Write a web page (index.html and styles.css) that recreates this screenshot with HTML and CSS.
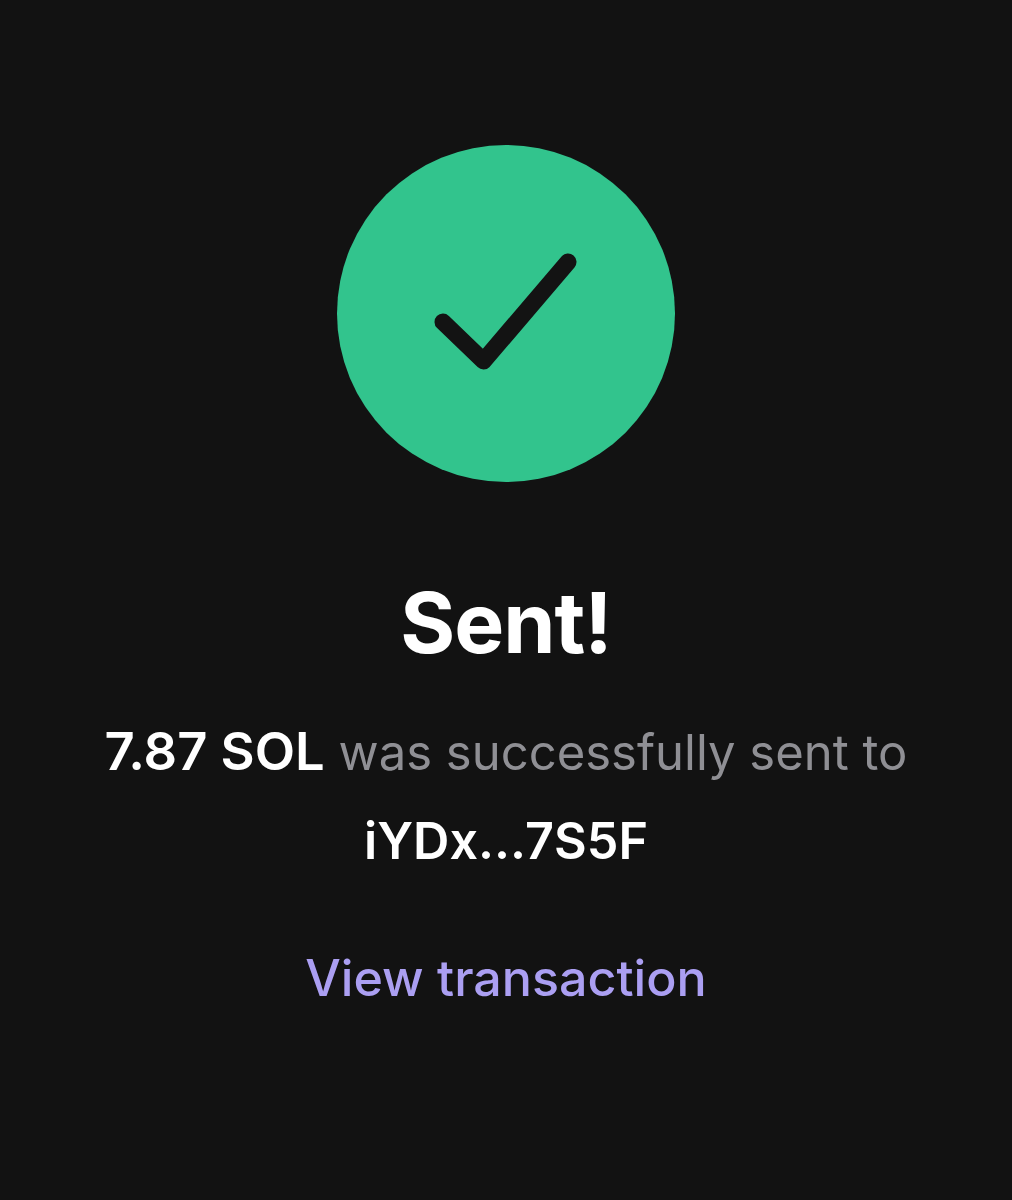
FILE: index.html
```html
<!DOCTYPE html>
<html lang="en">
<head>
<meta charset="utf-8">
<title>Sent</title>
<link rel="stylesheet" href="styles.css">
</head>
<body>
<main class="screen">
  <div class="badge">
    <svg class="check" viewBox="0 0 338 337" width="338" height="337" aria-hidden="true">
      <path d="M106 177L146.500 216L231 117" fill="none" stroke="#131313" stroke-width="17" stroke-linecap="round" stroke-linejoin="round"/>
    </svg>
  </div>
  <h1 class="title">Sent!</h1>
  <p class="line"><strong class="strong">7.87 SOL</strong> was successfully sent to</p>
  <p class="line address">iYDx...7S5F</p>
  <a class="link" href="#">View transaction</a>
</main>
</body>
</html>
```
FILE: styles.css
```css
html, body { margin: 0; padding: 0; background: #121212; }
.screen {
  width: 1012px;
  height: 1200px;
  box-sizing: border-box;
  padding-top: 145px;
  display: flex;
  flex-direction: column;
  align-items: center;
  font-family: Inter, sans-serif;
  background: #121212;
}
.badge { width: 338px; height: 337px; border-radius: 50%; background: #32c48d; }
.check { display: block; }
.title { margin: 95px 0 0; font-size: 84px; line-height: 92px; font-weight: 700; color: #fff; letter-spacing: -1px; }
.line { margin: 0; font-size: 49px; line-height: 88px; color: #8f8f94; font-weight: 400; }
.title + .line { margin-top: 38px; }
.strong { color: #fff; font-size: 52.5px; font-weight: 600; }
.address { color: #fff; font-size: 50.3px; font-weight: 600; }
.link { margin-top: 49px; font-size: 50.2px; line-height: 88px; color: #ab9ff2; text-decoration: none; font-weight: 500; }
```
